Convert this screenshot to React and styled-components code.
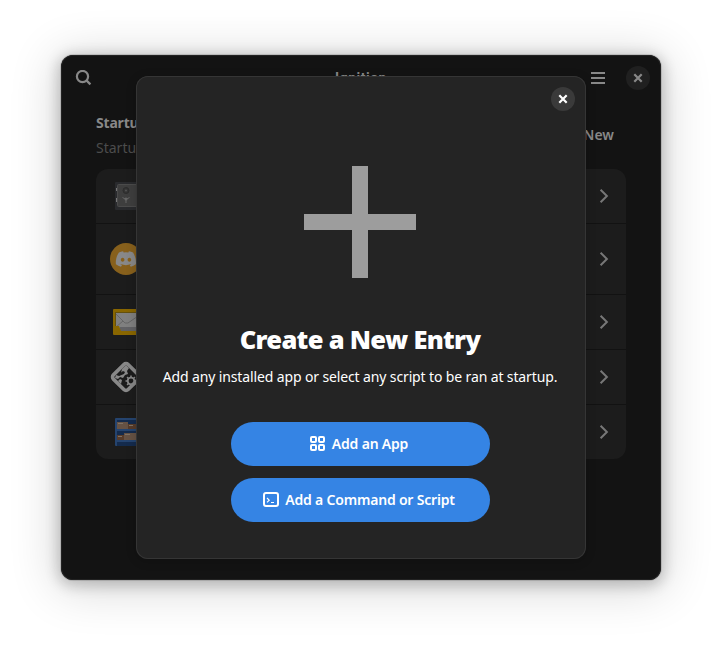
import React from "react";
import styled, { createGlobalStyle } from "styled-components";

const Global = createGlobalStyle`
  * { box-sizing: border-box; }
  body { margin: 0; background: #fff; font-family: "Noto Sans", "Open Sans", sans-serif; font-size: 14px; overflow: hidden; }
  svg { display: block; }
`;
const Page = styled.div`
  height: 647px;
  padding: 55px 61px 67px;
`;
const Window = styled.main`
  position: relative;
  width: 600px;
  height: 525px;
  border-radius: 12px;
  background: #131313;
  box-shadow: 0 0 0 1px rgba(0, 0, 0, 0.12), inset 0 0 0 1px #222, 0 3px 14px 3px rgba(0, 0, 0, 0.2), 0 5px 48px 5px rgba(0, 0, 0, 0.16);
  color: #888;
`;
const Header = styled.header`
  height: 46px;
  display: grid;
  grid-template-columns: 1fr auto 1fr;
  align-items: center;
  padding: 0 11px 0 14px;
`;
const WindowTitle = styled.span`
  font-family: Roboto, sans-serif;
  font-size: 14px;
  font-weight: 700;
  line-height: 20px;
  letter-spacing: 0.5px;
  padding-right: 3px;
`;
const Controls = styled.div`
  display: flex;
  justify-content: flex-end;
  align-items: center;
  gap: 21px;
`;
const RoundButton = styled.button`
  width: 24px;
  height: 24px;
  padding: 0;
  border: 0;
  border-radius: 50%;
  display: grid;
  place-items: center;
  color: ${(p) => (p.$bright ? "#fff" : "#888")};
  background: ${(p) => (p.$bright ? "#3a3a3a" : "#202020")};
`;
const GroupHeader = styled.div`
  display: flex;
  justify-content: space-between;
  padding: 9px 47px 0 35px;
  height: 68px;
`;
const Heading = styled.div`
  font-weight: 700;
  line-height: 25px;
  letter-spacing: -0.2px;
`;
const Caption = styled.div`
  line-height: 25px;
  color: #4c4c4c;
`;
const NewLabel = styled.span`
  font-weight: 600;
  line-height: 24px;
  margin-top: 13px;
`;
const List = styled.section`
  margin: 0 35px;
  border-radius: 12px;
  background: #1c1c1c;
  overflow: hidden;
`;
const Row = styled.div`
  height: ${(p) => (p.$tall ? 71 : 55)}px;
  padding: 0 14px;
  display: flex;
  align-items: center;
  justify-content: space-between;
  border-bottom: 1px solid #121212;
  &:last-child { height: 54px; border-bottom: 0; }
`;
const Dialog = styled.div`
  position: absolute;
  left: 75px;
  top: 21px;
  width: 450px;
  height: 483px;
  border-radius: 12px;
  background: #242424;
  box-shadow: inset 0 0 0 1px #353535, 0 2px 8px 2px rgba(0, 0, 0, 0.13);
  color: #fff;
  padding: 11px 12px 11px 10px;
  display: flex;
  flex-direction: column;
  align-items: center;
`;
const DialogClose = styled.div`
  align-self: flex-end;
  height: 24px;
  margin-right: -1px;
`;
const PlusArt = styled.div`
  margin-top: 55px;
`;
const DialogTitle = styled.h1`
  margin: 43px 0 0;
  font-size: 25.5px;
  font-weight: 900;
  line-height: 36px;
  letter-spacing: -0.69px;
  white-space: nowrap;
`;
const Description = styled.p`
  margin: 10px 0 0;
  line-height: 20px;
  letter-spacing: -0.13px;
  white-space: nowrap;
`;
const Actions = styled.div`
  display: grid;
  gap: 12px;
  margin-top: 35px;
`;
const Action = styled.button`
  width: 259px;
  height: 44px;
  padding: 0 2px 0 0;
  border: 0;
  border-radius: 22px;
  background: #3584e4;
  color: #fff;
  font: 600 14px/20px "Noto Sans", sans-serif;
  letter-spacing: -0.19px;
  display: flex;
  align-items: center;
  justify-content: center;
  gap: 6px;
`;

const Cross = () => (
  <svg width="10" height="10" viewBox="0 0 10 10" fill="none" stroke="currentColor" strokeWidth="2.2">
    <path d="m1.3 1.3 7.4 7.4m0-7.4L1.3 8.7" />
  </svg>
);
const Search = () => (
  <svg width="17" height="17" viewBox="0 0 17 17" fill="none" stroke="#888" strokeWidth="2.2">
    <circle cx="7.5" cy="6.5" r="5.6" />
    <path d="m11.4 10.4 4 4" />
  </svg>
);
const Menu = () => (
  <svg width="14" height="12" viewBox="0 0 14 12" fill="#888">
    <path d="M0 0h14v2H0zm0 5h14v2H0zm0 5h14v2H0z" />
  </svg>
);
const Chevron = () => (
  <svg width="16" height="16" viewBox="0 0 16 16" fill="none" stroke="#777" strokeWidth="2">
    <path d="m4.6 1.7 6.3 6.3-6.3 6.3" />
  </svg>
);
const Safe = () => (
  <svg width="32" height="32" viewBox="0 0 32 32">
    <rect x="5" y="2" width="26" height="28" rx="1" fill="#292a2d" />
    <rect x="7.5" y="4.5" width="21" height="22" rx="1" fill="#3e3e3e" stroke="#4b4b4b" />
    <path d="M6.5 8v3m0 7v4" stroke="#777" />
    <circle cx="16" cy="10.5" r="3" fill="#343434" stroke="#2c2c2c" />
    <circle cx="16" cy="10.5" r="1.1" fill="#505050" />
    <path d="m12.5 17.5 3.5 2 3.5-2M16 19v4" stroke="#666" fill="none" />
    <circle cx="16" cy="19" r="1.5" fill="#666" />
  </svg>
);
const Discord = () => (
  <svg width="32" height="32" viewBox="0 0 32 32">
    <circle cx="16" cy="16" r="16" fill="#87601c" />
    <path transform="translate(5.8 5.8) scale(.85)" fill="#888" d="M20.32 4.37A19.8 19.8 0 0 0 15.43 2.86l-.68 1.37a18.3 18.3 0 0 0-5.49 0l-.69-1.37a19.7 19.7 0 0 0-4.89 1.51C.53 9.05-.32 13.58.1 18.06a19.9 19.9 0 0 0 6 3.03l1.22-1.99-1.87-.9.37-.29c3.93 1.79 8.18 1.79 12.06 0l.38.3-1.88.89 1.23 1.99a19.8 19.8 0 0 0 6-3.03c.5-5.18-.84-9.68-3.29-13.69ZM8.02 15.33c-2.84-.2-2.84-4.62 0-4.83 2.85.2 2.85 4.63 0 4.83Zm7.97 0c-2.84-.2-2.84-4.62 0-4.83 2.85.2 2.85 4.63 0 4.83Z" />
  </svg>
);
const Mail = () => (
  <svg width="32" height="32" viewBox="0 0 32 32">
    <rect x="3" y="3" width="28" height="26" rx="1" fill="#896600" />
    <path d="M5 6h26v19H5z" fill="#64500e" />
    <path d="M6 7h25v16H6z" fill="#808080" />
    <path d="m6 8 9 9h3L31 8M6 21l7-6" fill="none" stroke="#666" />
    <path d="M10 21h18v5H10z" fill="#626265" />
    <path d="M4 20h5l2 5h17v3H4z" fill="#896600" />
  </svg>
);
const Gears = () => (
  <svg width="32" height="32" viewBox="0 0 32 32">
    <rect x="5.6" y="5.6" width="20.8" height="20.8" rx="3" transform="rotate(45 16 16)" fill="#1b1b1b" stroke="#888" strokeWidth="3.6" />
    <path d="m6 14 3 1 2-3 1-4 4-4 3 3-2 3 1 3-3 1-2 3-3-1-2 2-3-1z" fill="#888" />
    <path d="m8 20 2-2 2 1-1 4z" fill="#888" />
    <path d="m9 13 4-3 2 1-1 2-5 2z" fill="#1b1b1b" />
    <circle cx="21" cy="20" r="3.3" fill="none" stroke="#888" strokeWidth="1.8" />
    <path d="M21 14.5v2m0 7v2M15.5 20h2m7 0h2m-9.4-3.9 1.4 1.4m5 5 1.4 1.4m-7.8 0 1.4-1.4m5-5 1.4-1.4" stroke="#888" strokeWidth="1.6" />
  </svg>
);
const Shelf = () => (
  <svg width="32" height="32" viewBox="0 0 32 32">
    <rect x="5" y="2" width="26" height="28" rx="1" fill="#25446f" />
    <path d="M7 4h24v9H7zm0 11h24v9H7zm0 11h24v4H7z" fill="#142b4d" />
    <path d="M7 6h11v7H7zm7 11h17v7H14z" fill="#665244" />
    <path d="M18 8h13v5H18zM7 19h7v5H7z" fill="#573b29" />
    <path d="M8 7h5v1H8zm11 2h4v1h-4zm-11 11h4v1H8zm7-2h5v1h-5z" fill="#7e7164" />
  </svg>
);
const Apps = () => (
  <svg width="16" height="16" viewBox="0 0 16 16" fill="none" stroke="currentColor" strokeWidth="2">
    <rect x="1" y="1" width="5" height="5" rx="1" />
    <rect x="9" y="1" width="5" height="5" rx="1" />
    <rect x="1" y="9" width="5" height="5" rx="1" />
    <rect x="9" y="9" width="5" height="5" rx="1" />
  </svg>
);
const Terminal = () => (
  <svg width="16" height="16" viewBox="0 0 16 16" fill="none" stroke="currentColor">
    <rect x="1" y="1" width="14" height="13" rx="2" strokeWidth="2" />
    <path d="m4 6 2.2 2.2L4 10.4M8 10.5h3" strokeWidth="1.2" />
  </svg>
);
const entries = [Safe, Discord, Mail, Gears, Shelf];

export default function App() {
  return (
    <Page>
      <Global />
      <Window>
        <Header>
          <Search />
          <WindowTitle>Ignition</WindowTitle>
          <Controls>
            <Menu />
            <RoundButton aria-label="Close window"><Cross /></RoundButton>
          </Controls>
        </Header>
        <GroupHeader>
          <div>
            <Heading>Startup</Heading>
            <Caption>Startup</Caption>
          </div>
          <NewLabel>New</NewLabel>
        </GroupHeader>
        <List>
          {entries.map((Icon, i) => (
            <Row key={i} $tall={i === 1}>
              <Icon />
              <Chevron />
            </Row>
          ))}
        </List>
        <Dialog role="dialog">
          <DialogClose>
            <RoundButton $bright aria-label="Close"><Cross /></RoundButton>
          </DialogClose>
          <PlusArt>
            <svg width="112" height="112" viewBox="0 0 112 112" fill="#9d9d9d">
              <path d="M48 0h16v48h48v16H64v48H48V64H0V48h48z" />
            </svg>
          </PlusArt>
          <DialogTitle>Create a New Entry</DialogTitle>
          <Description>Add any installed app or select any script to be ran at startup.</Description>
          <Actions>
            <Action><Apps />Add an App</Action>
            <Action><Terminal />Add a Command or Script</Action>
          </Actions>
        </Dialog>
      </Window>
    </Page>
  );
}
